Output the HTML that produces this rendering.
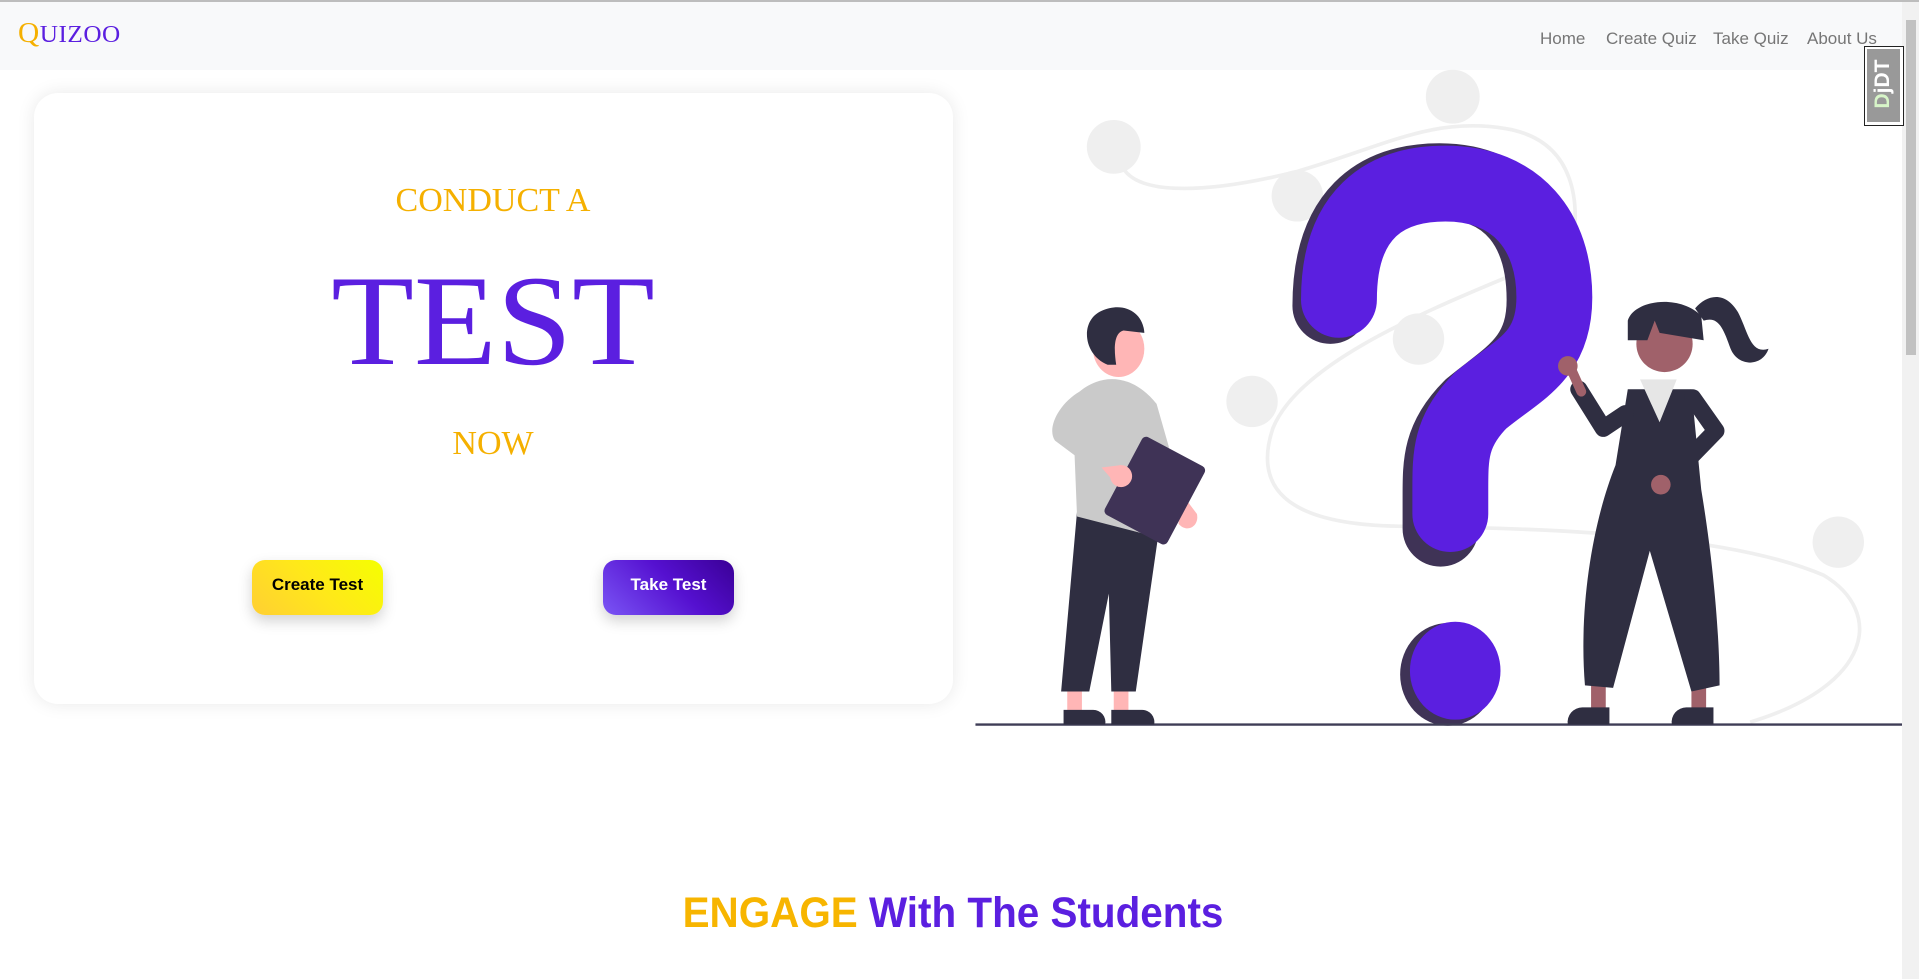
<!DOCTYPE html>
<html><head><meta charset="utf-8"><style>
html,body{margin:0;padding:0;width:1919px;height:979px;overflow:hidden;background:#fff;font-family:"Liberation Sans",sans-serif;position:relative}
.abs{position:absolute}
.topline{left:0;top:0;width:1919px;height:2px;background:#bdbdbd}
.nav{left:0;top:2px;width:1919px;height:68px;background:#f8f9fa}
.logo{left:18px;top:18px;font-family:"Liberation Serif",serif;color:#5b1fe0;font-size:24px;letter-spacing:0.5px;white-space:nowrap;transform:scaleX(1.05);transform-origin:left}
.logo b{font-weight:normal;color:#f5b000;font-size:28px}
.nl{top:29px;font-size:17px;color:#767676;white-space:nowrap}
.card{left:34px;top:93px;width:919px;height:611px;border-radius:24px;box-shadow:0 0 18px rgba(0,0,0,.09);background:#fff}
.serif{font-family:"Liberation Serif",serif;text-align:center;white-space:nowrap}
.btn{height:55px;width:131px;border-radius:13px;box-shadow:0 6px 14px rgba(0,0,0,.18);font-size:17px;font-weight:bold;text-align:center;line-height:50px}
</style></head><body>
<div class="abs topline"></div>
<div class="abs nav"></div>
<div class="abs logo"><b>Q</b>UIZOO</div>
<div class="abs nl" style="left:1540px">Home</div>
<div class="abs nl" style="left:1606px">Create Quiz</div>
<div class="abs nl" style="left:1713px">Take Quiz</div>
<div class="abs nl" style="left:1807px">About Us</div>

<div class="abs card"></div>
<div class="abs serif" style="left:293px;width:400px;top:182px;font-size:34px;color:#f5b000">CONDUCT A</div>
<div class="abs serif" style="left:193px;width:600px;top:256px;font-size:129px;line-height:129px;color:#5b1fe0;transform:scaleX(1.05)">TEST</div>
<div class="abs serif" style="left:293px;width:400px;top:425px;font-size:34px;color:#f5b000">NOW</div>
<div class="abs btn" style="left:252px;top:560px;background:linear-gradient(45deg,#ffcf33,#ffe81a 50%,#f5ff00);color:#000">Create Test</div>
<div class="abs btn" style="left:603px;top:560px;background:linear-gradient(45deg,#7a55f5,#5510d0 55%,#3a0096);color:#fff">Take Test</div>

<svg class="abs" style="left:0;top:0" width="1919" height="979" viewBox="0 0 1919 979">
<g transform="scale(1.2239)">
<g fill="none" stroke="#efefef" stroke-width="3">
<path d="M915,130 C920,160 980,160 1060,140 C1130,120 1170,95 1230,105 C1290,115 1290,170 1285,200"/>
<path d="M1235,225 C1150,260 1060,300 1040,350 C1020,410 1070,430 1150,430 C1300,432 1420,440 1490,470 C1540,500 1530,560 1430,590"/>
</g>
<g fill="#efefef">
<circle cx="910" cy="120" r="22"/><circle cx="1187" cy="79" r="22"/><circle cx="1060" cy="160" r="21"/>
<circle cx="1159" cy="277" r="21"/><circle cx="1023" cy="328" r="21"/><circle cx="1502" cy="443" r="21"/><circle cx="1168" cy="408" r="20"/>
</g>
<path d="M1087,250 C1087,175 1125,148 1176,148 C1236,148 1262,190 1262,245 C1262,295 1232,308 1202,333 C1177,358 1177,378 1177,405 L1177,432" fill="none" stroke="#3f3356" stroke-width="62" stroke-linecap="round"/>
<path d="M1094,245 C1094,175 1131,150 1181,150 C1240,150 1270,190 1270,243 C1270,292 1240,302 1210,327 C1185,352 1185,372 1185,400 L1185,420" fill="none" stroke="#5b1fe0" stroke-width="62" stroke-linecap="round"/>
<ellipse cx="1183" cy="551" rx="39" ry="42" fill="#3f3356"/>
<ellipse cx="1189" cy="548" rx="37" ry="40" fill="#5b1fe0"/>
<line x1="797" y1="592" x2="1557" y2="592" stroke="#3f3d56" stroke-width="2"/>
<rect x="872" y="560" width="12" height="22" fill="#ffb6b6"/><rect x="910" y="560" width="12" height="22" fill="#ffb6b6"/>
<path d="M869,592 V580 H893 A10,10 0 0 1 903,592Z" fill="#2f2e41"/><path d="M908,592 V580 H933 A10,10 0 0 1 943,592Z" fill="#2f2e41"/>
<path d="M880,418 L946,440 L928,565 L908,565 L906,485 L890,565 L867,565Z" fill="#2f2e41"/>
<path d="M882,320 C900,305 925,305 945,330 L955,365 L950,440 L880,422 L878,372 L862,360 C855,350 865,330 882,320Z" fill="#cacaca"/>
<path d="M963,400 L978,420 C980,430 970,436 963,428Z" fill="#ffb6b6"/>
<rect x="915" y="365" width="58" height="72" rx="4" fill="#3f3356" transform="rotate(28 944 400)"/>
<circle cx="916" cy="389" r="9" fill="#ffb6b6"/><path d="M900,382 L916,380 L914,398Z" fill="#ffb6b6"/>
<ellipse cx="914" cy="285" rx="21" ry="23" fill="#ffb6b6"/>
<path d="M905,298 C885,290 882,262 900,254 C918,246 934,255 935,272 L918,270 C910,272 910,285 912,298Z" fill="#2f2e41"/>
<rect x="1300" y="555" width="12" height="28" fill="#a0616a"/><rect x="1382" y="555" width="12" height="28" fill="#a0616a"/>
<path d="M1281,592 A12,12 0 0 1 1293,578 H1315 V592Z" fill="#2f2e41"/><path d="M1366,592 A12,12 0 0 1 1378,578 H1400 V592Z" fill="#2f2e41"/>
<path d="M1330,318 L1382,318 L1390,400 C1400,460 1405,520 1405,560 L1382,565 L1348,450 L1318,562 L1295,560 C1290,500 1300,430 1320,380Z" fill="#2f2e41"/>
<path d="M1340,310 L1370,310 L1356,345Z" fill="#e6e6e6"/>
<path d="M1290,318 L1310,350 L1328,338" fill="none" stroke="#2f2e41" stroke-width="14" stroke-linecap="round" stroke-linejoin="round"/>
<path d="M1283,300 L1292,320" stroke="#a0616a" stroke-width="8" stroke-linecap="round"/>
<circle cx="1281" cy="299" r="8" fill="#a0616a"/>
<path d="M1383,325 L1402,352 L1365,390" fill="none" stroke="#2f2e41" stroke-width="14" stroke-linecap="round" stroke-linejoin="round"/>
<circle cx="1357" cy="396" r="8" fill="#a0616a"/>
<circle cx="1360" cy="281" r="23" fill="#a0616a"/>
<path d="M1330,278 L1330,262 C1335,245 1372,240 1390,258 L1392,278 L1356,272 L1352,262 L1346,278Z" fill="#2f2e41"/>
<path d="M1385,252 C1395,240 1410,238 1420,255 C1428,270 1430,290 1445,285 C1440,300 1420,300 1414,285 C1408,268 1404,258 1392,262Z" fill="#2f2e41"/>
</g>
</svg>

<div class="abs" style="left:0;top:889px;width:1906px;text-align:center;font-size:43px;font-weight:bold;white-space:nowrap;transform:scaleX(0.94)"><span style="color:#f7b500">ENGAGE</span> <span style="color:#5b1fe0">With The Students</span></div>

<div class="abs" style="left:1902px;top:2px;width:17px;height:977px;background:#f1f1f1"></div>
<div class="abs" style="left:1906px;top:20px;width:10px;height:335px;background:#c1c1c1"></div>
<div class="abs" style="left:1864px;top:46px;width:38px;height:78px;border:1px solid #222;background:#fff"></div>
<div class="abs" style="left:1867px;top:49px;width:33px;height:73px;background:#999"></div>
<div class="abs" style="left:1846px;top:74px;width:74px;height:20px;transform:rotate(-90deg);color:#fff;font-weight:bold;font-size:21px;text-align:center;line-height:20px"><span style="color:#d7f5c8">D</span>jDT</div>
</body></html>
